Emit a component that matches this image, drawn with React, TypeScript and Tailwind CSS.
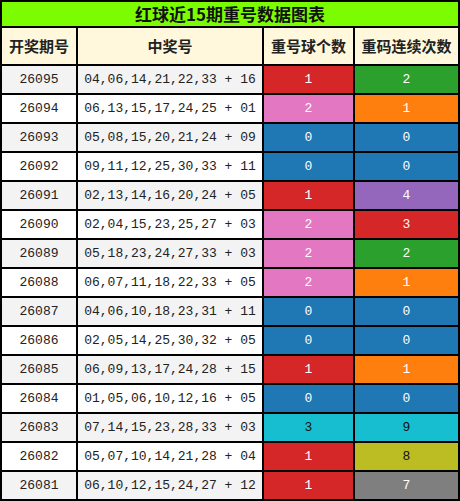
const cellColors: Record<string, string> = {
  red: "bg-[#d62728] text-white",
  green: "bg-[#2ca02c] text-white",
  pink: "bg-[#e377c2] text-white",
  orange: "bg-[#ff7f0e] text-white",
  blue: "bg-[#1f77b4] text-white",
  purple: "bg-[#9467bd] text-white",
  cyan: "bg-[#17becf] text-[#111]",
  olive: "bg-[#bcbd22] text-[#111]",
  gray: "bg-[#7f7f7f] text-white",
};

const rows: [string, string, number, string, number, string][] = [
  ["26095", "04,06,14,21,22,33 + 16", 1, "red", 2, "green"],
  ["26094", "06,13,15,17,24,25 + 01", 2, "pink", 1, "orange"],
  ["26093", "05,08,15,20,21,24 + 09", 0, "blue", 0, "blue"],
  ["26092", "09,11,12,25,30,33 + 11", 0, "blue", 0, "blue"],
  ["26091", "02,13,14,16,20,24 + 05", 1, "red", 4, "purple"],
  ["26090", "02,04,15,23,25,27 + 03", 2, "pink", 3, "red"],
  ["26089", "05,18,23,24,27,33 + 03", 2, "pink", 2, "green"],
  ["26088", "06,07,11,18,22,33 + 05", 2, "pink", 1, "orange"],
  ["26087", "04,06,10,18,23,31 + 11", 0, "blue", 0, "blue"],
  ["26086", "02,05,14,25,30,32 + 05", 0, "blue", 0, "blue"],
  ["26085", "06,09,13,17,24,28 + 15", 1, "red", 1, "orange"],
  ["26084", "01,05,06,10,12,16 + 05", 0, "blue", 0, "blue"],
  ["26083", "07,14,15,23,28,33 + 03", 3, "cyan", 9, "cyan"],
  ["26082", "05,07,10,14,21,28 + 04", 1, "red", 8, "olive"],
  ["26081", "06,10,12,15,24,27 + 12", 1, "red", 7, "gray"],
];

const mono = "font-['Liberation_Mono',monospace] text-[13px]";
const cjk = "font-['Noto_Sans_CJK_SC',sans-serif] font-bold";

export default function App() {
  return (
    <div className="w-[460px] h-[501px] bg-white">
      <div className="bg-black p-[2px] flex flex-col gap-[2px] w-[460px]">
        <div className={`h-[24px] bg-[#7cfc00] flex items-center justify-center text-[17px] text-[#111] ${cjk}`}>
          红球近15期重号数据图表
        </div>
        <div className="grid grid-cols-[74px_184px_89px_103px] gap-[2px]">
          {["开奖期号", "中奖号", "重号球个数", "重码连续次数"].map((h) => (
            <div key={h} className={`h-[36px] bg-[#fff8dc] flex items-center justify-center text-[15px] text-[#222] ${cjk}`}>
              {h}
            </div>
          ))}
          {rows.map(([issue, nums, a, ca, b, cb], i) => {
            const bg = i % 2 === 0 ? "bg-[#f3f3f3]" : "bg-white";
            return [
              <div key={issue + "a"} className={`h-[27px] ${bg} flex items-center justify-center text-[#222] ${mono}`}>
                {issue}
              </div>,
              <div key={issue + "b"} className={`h-[27px] ${bg} flex items-center justify-center text-[#222] whitespace-pre ${mono}`}>
                {nums}
              </div>,
              <div key={issue + "c"} className={`h-[27px] flex items-center justify-center ${cellColors[ca]} ${mono}`}>
                {a}
              </div>,
              <div key={issue + "d"} className={`h-[27px] flex items-center justify-center ${cellColors[cb]} ${mono}`}>
                {b}
              </div>,
            ];
          })}
        </div>
      </div>
    </div>
  );
}
